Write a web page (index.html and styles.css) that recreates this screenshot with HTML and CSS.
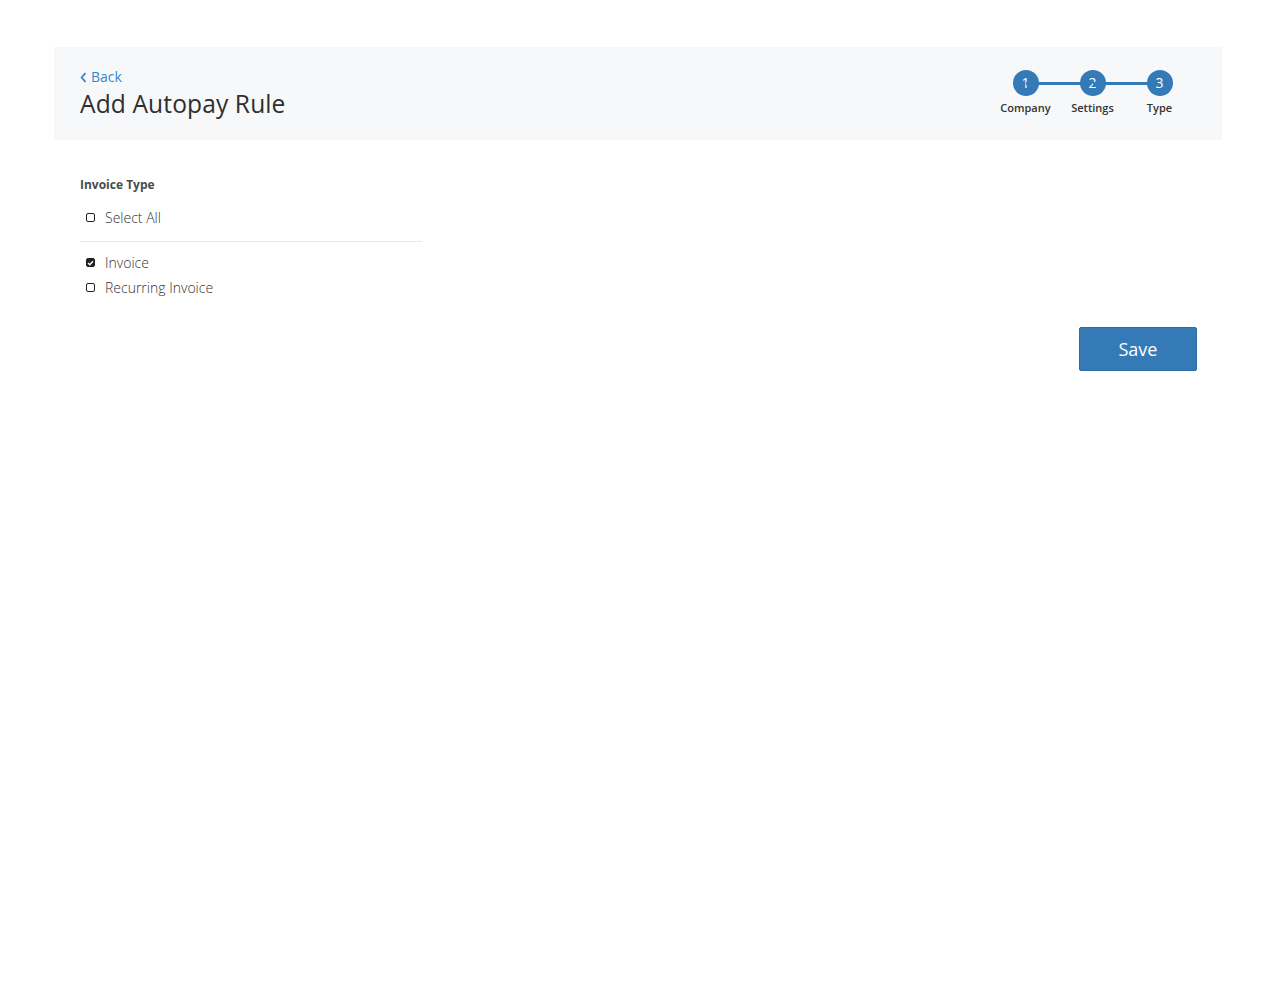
FILE: index.html
```html
<!DOCTYPE html>
<html>
<head>
<meta charset="utf-8">
<link rel="stylesheet" href="styles.css">
</head>
<body>
<div class="page">
  <header class="head">
    <div class="head-left">
      <a class="back" href="#"><svg class="chev" width="7" height="11" viewBox="0 0 7 11"><path d="M5.5 1.2 L1.6 5.5 L5.5 9.8" fill="none" stroke="#3a86cf" stroke-width="1.8"/></svg>Back</a>
      <h1 class="title">Add Autopay Rule</h1>
    </div>
    <div class="stepper">
      <div class="step">
        <div class="dot">1</div>
        <div class="slabel">Company</div>
      </div>
      <div class="step">
        <div class="dot">2</div>
        <div class="slabel">Settings</div>
      </div>
      <div class="step">
        <div class="dot">3</div>
        <div class="slabel">Type</div>
      </div>
    </div>
  </header>
  <section class="content">
    <div class="group">
      <div class="glabel">Invoice Type</div>
      <label class="opt first"><span class="box"></span>Select All</label>
      <div class="divider"></div>
      <label class="opt"><span class="box checked"><svg width="7" height="6" viewBox="0 0 7 6"><path d="M1 3 L2.8 4.7 L6 1.2" fill="none" stroke="#fff" stroke-width="1.4"/></svg></span>Invoice</label>
      <label class="opt"><span class="box"></span>Recurring Invoice</label>
    </div>
    <div class="actions">
      <button class="save">Save</button>
    </div>
  </section>
</div>
</body>
</html>
```
FILE: styles.css
```css
html, body { margin: 0; padding: 0; background: #fff; }
body { font-family: "Open Sans", "Noto Sans", sans-serif; color: #333; }
.page { width: 1168px; margin: 47px 0 0 54px; }
.head {
  background: #f7f8fa;
  height: 93px;
  box-sizing: border-box;
  padding: 0 29px 0 26px;
  display: flex;
  justify-content: space-between;
  align-items: flex-start;
}
.head-left { padding-top: 20px; }
.back {
  display: flex; align-items: center; gap: 4px;
  color: #3a86cf; text-decoration: none; font-size: 14px; line-height: 19px; font-weight: 500;
}
.chev { margin-top: 1px; }
.title { margin: 1px 0 0; font-weight: 400; font-size: 24.6px; line-height: 33px; color: #2f2f2f; letter-spacing: 0.1px; }
.stepper { display: flex; padding-top: 23px; }
.step { width: 67px; display: flex; flex-direction: column; align-items: center; position: relative; }
.step + .step::before {
  content: ""; position: absolute; left: -33px; width: 66px; top: 12px; height: 3px; background: #337ab7;
}
.dot {
  position: relative;
  width: 26px; height: 26px; border-radius: 50%; background: #337ab7; color: #fff;
  font-size: 14px; line-height: 26px; text-align: center;
}
.slabel { font-size: 11px; line-height: 14px; margin-top: 5px; color: #333; white-space: nowrap; font-weight: 600; }
.content { padding: 0 25px 0 26px; }
.group { width: 342px; padding-top: 37px; }
.glabel { font-size: 12px; font-weight: 700; color: #4a4a4a; line-height: 16px; }
.opt { display: flex; align-items: center; gap: 10px; font-size: 14px; line-height: 25px; color: #333; padding-left: 6px; font-weight: 300; }
.opt.first { margin-top: 12px; }
.divider { height: 1px; background: #e4e6e8; margin: 11px 0 8px; }
.box {
  width: 9px; height: 9px; box-sizing: border-box; border: 1.5px solid #222; border-radius: 2px;
  display: flex; align-items: center; justify-content: center; flex: none;
}
.box.checked { background: #222; border-color: #222; }
.box svg { display: block; }
.actions { display: flex; justify-content: flex-end; margin-top: 27px; }
.save {
  width: 118px; height: 44px; background: #337ab7; color: #fff; border: 1px solid #2e6da4; border-radius: 2px;
  font-family: "Open Sans", sans-serif; font-size: 18px; cursor: pointer;
}
```
